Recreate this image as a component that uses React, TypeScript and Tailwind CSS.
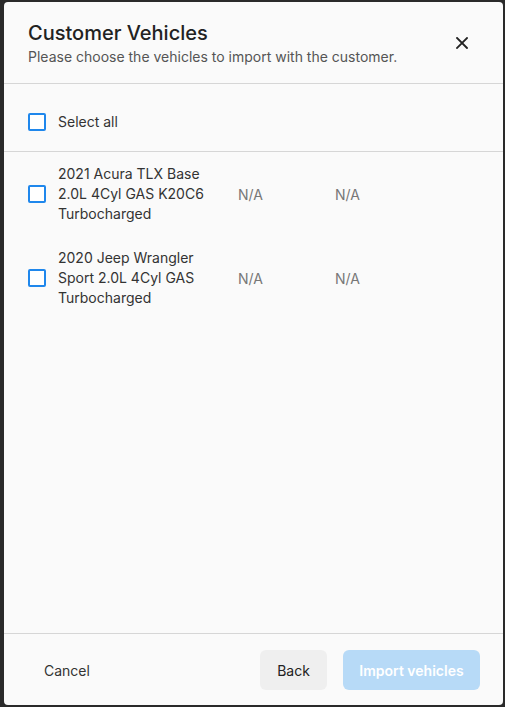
import React from 'react';

const vehicles = [
  { id: 1, name: '2021 Acura TLX Base 2.0L 4Cyl GAS K20C6 Turbocharged', vin: 'N/A', plate: 'N/A' },
  { id: 2, name: '2020 Jeep Wrangler Sport 2.0L 4Cyl GAS Turbocharged', vin: 'N/A', plate: 'N/A' },
];

const Box = () => (
  <span className="block w-[18px] h-[18px] shrink-0 rounded-[2px] border-2 border-[#1f87ec] bg-white" />
);

const App = () => {
  return (
    <div
      className="h-[707px] w-[505px] bg-[#2a2a2a] pl-[4px] pr-[2px] py-[2px] flex"
      style={{ fontFamily: 'Inter, "Liberation Sans", sans-serif' }}
    >
      <div className="flex-1 flex flex-col rounded-[4px] bg-[#fafafa] overflow-hidden">
        <div className="flex items-center justify-between pl-6 pr-[29px] pt-[17px] pb-4 border-b border-[#d6d6d6]">
          <div>
            <h2 className="text-[20px] leading-7 font-medium text-[#222]">Customer Vehicles</h2>
            <p className="text-[14px] leading-5 text-[#555]">Please choose the vehicles to import with the customer.</p>
          </div>
          <button className="w-6 h-6 flex items-center justify-center text-[#222]">
            <svg width="12" height="12" viewBox="0 0 12 12" fill="none" stroke="currentColor" strokeWidth="1.8" strokeLinecap="square">
              <path d="M1 1L11 11M11 1L1 11" />
            </svg>
          </button>
        </div>

        <div className="flex-1 flex flex-col">
          <label className="flex items-center gap-3 px-6 pt-[28px] pb-[19px] border-b border-[#d6d6d6]">
            <Box />
            <span className="text-[14px] leading-5 text-[#333]">Select all</span>
          </label>

          {vehicles.map(v => (
            <div key={v.id} className="flex items-center px-6 py-3">
              <Box />
              <p className="ml-3 w-[160px] text-[14px] leading-5 text-[#333]">{v.name}</p>
              <span className="ml-5 w-[97px] text-[14px] text-[#777]">{v.vin}</span>
              <span className="text-[14px] text-[#777]">{v.plate}</span>
            </div>
          ))}
        </div>

        <div className="flex items-center border-t border-[#d6d6d6] pt-4 pb-[15px] pl-6 pr-[23px]">
          <button className="h-10 px-4 text-[14px] text-[#333]">Cancel</button>
          <div className="ml-auto flex gap-4">
            <button className="h-10 w-[67px] rounded-md bg-[#efefef] text-[14px] text-[#222]">Back</button>
            <button className="h-10 w-[137px] rounded-md bg-[#b7daf7] text-[14px] font-semibold text-white">Import vehicles</button>
          </div>
        </div>
      </div>
    </div>
  );
};

export default App;
